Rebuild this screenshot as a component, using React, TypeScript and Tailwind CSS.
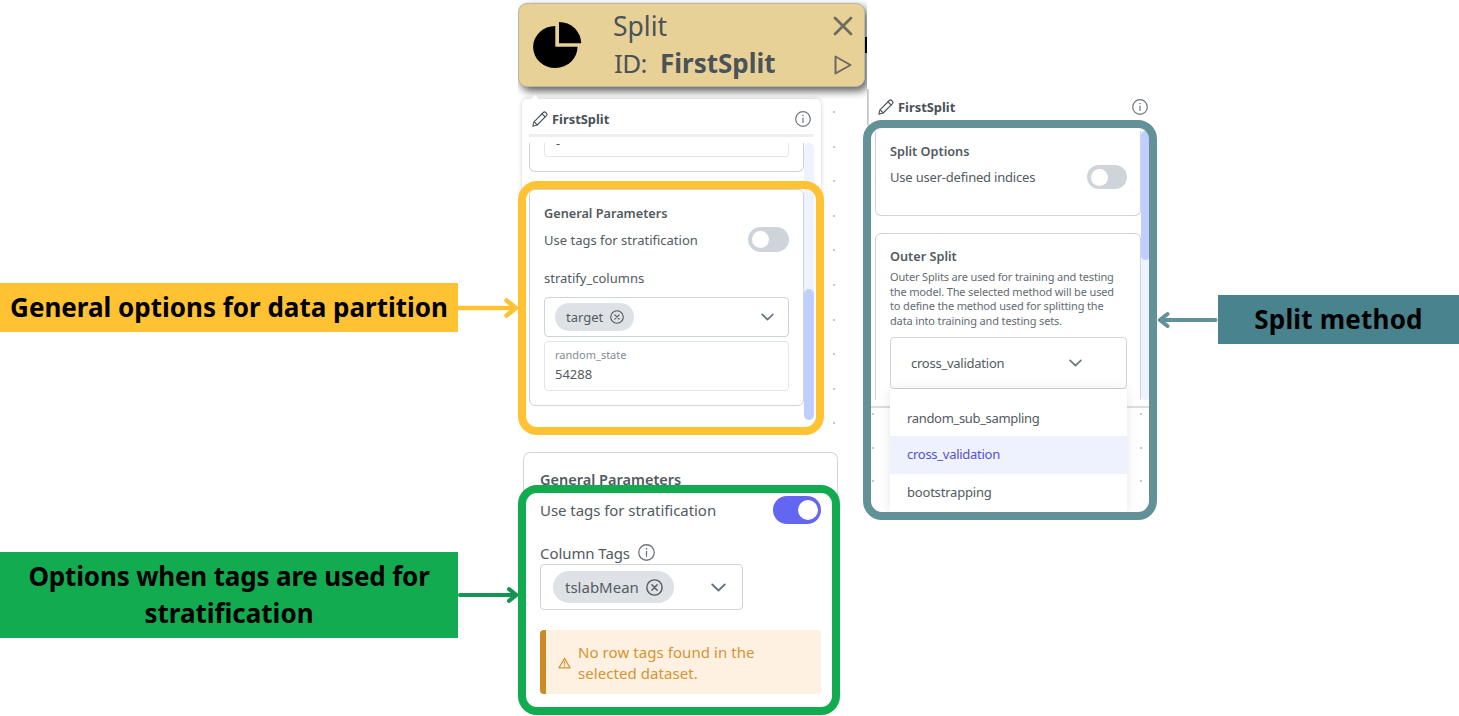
import React from "react";

type IconProps = { className?: string };

function Pencil({ className }: IconProps) {
  return (
    <svg viewBox="0 0 16 16" className={className} fill="none" stroke="currentColor" strokeWidth="1.100" strokeLinejoin="round" strokeLinecap="round">
      <path d="M.8 15.200 2 10.800 11.300 1.500q1.200-1.100 2.400 0l.8.8q1.100 1.200 0 2.400L5.200 14Z" />
      <path d="M10 2.800 13.200 6M2.200 10.800 5.200 13.800" />
    </svg>
  );
}

function Info({ className }: IconProps) {
  return (
    <svg viewBox="0 0 16 16" className={className} fill="none" stroke="currentColor">
      <circle cx="8" cy="8" r="7.300" strokeWidth="1.200" />
      <path d="M8 7v4.500" strokeWidth="1.200" strokeLinecap="round" />
      <circle cx="8" cy="4.600" r=".75" fill="currentColor" stroke="none" />
    </svg>
  );
}

function Remove({ className }: IconProps) {
  return (
    <svg viewBox="0 0 16 16" className={className} fill="none" stroke="currentColor" strokeWidth="1.300" strokeLinecap="round">
      <circle cx="8" cy="8" r="7.200" />
      <path d="m5.500 5.500 5 5m0-5-5 5" />
    </svg>
  );
}

function Chevron({ className }: IconProps) {
  return (
    <svg viewBox="0 0 14 8" className={className} fill="none" stroke="currentColor" strokeWidth="1.800" strokeLinecap="round" strokeLinejoin="round">
      <path d="m1.200 1.200 5.800 5.600 5.800-5.600" />
    </svg>
  );
}

function Warning({ className }: IconProps) {
  return (
    <svg viewBox="0 0 14 12" className={className} fill="none" stroke="currentColor" strokeWidth="1.300" strokeLinejoin="round" strokeLinecap="round">
      <path d="M7 1 13 11.200H1Z" />
      <path d="M7 4.500v2.800M7 9.200v.2" />
    </svg>
  );
}

function Dots({ count, className }: { count: number; className: string }) {
  return (
    <div className={`flex flex-col ${className}`}>
      {Array.from({ length: count }, (_, i) => (
        <span key={i} className="size-[2px] shrink-0 rounded-full bg-[#b4b4b4]" />
      ))}
    </div>
  );
}

function Callouts() {
  return (
    <div className="flex w-[518px] shrink-0 flex-col pt-[283px] font-bold text-black">
      <div className="flex items-center">
        <div className="flex h-[49px] w-[458px] items-center justify-center bg-[#ffc233] pb-[2px]">
          <span className="whitespace-nowrap text-[26px] leading-[36px]">General options for data partition</span>
        </div>
        <svg viewBox="0 0 60 24" className="h-6 w-[60px] text-[#ffc233]" fill="none" stroke="currentColor" strokeWidth="4.500" strokeLinecap="round" strokeLinejoin="round">
          <path d="M0 12H57M48.500 4.500 58 12l-9.500 7.500" />
        </svg>
      </div>
      <div className="mt-[220px] flex items-center">
        <div className="flex h-[86px] w-[458px] items-center justify-center bg-[#12ab50]">
          <span className="text-center text-[26px] leading-[37px]">
            <span className="tracking-[-0.16px]">Options when tags are used for</span>
            <br />
            stratification
          </span>
        </div>
        <svg viewBox="0 0 60 24" className="h-6 w-[60px] text-[#129552]" fill="none" stroke="currentColor" strokeWidth="4" strokeLinecap="round" strokeLinejoin="round">
          <path d="M2 12H57M51 6.200 58.500 12 51 17.800" />
        </svg>
      </div>
    </div>
  );
}

function NodeCard() {
  return (
    <div className="relative h-[99px] w-[349px] overflow-hidden pt-[3px]">
      <div className="relative flex h-[84px] w-[347px] rounded-[9px] border border-[#bdb59d] bg-[#e8d197] text-[#4b5359] shadow-[3px_4px_8px_0px_rgba(0,0,0,0.65)]">
        <svg viewBox="0 0 49 46" className="ml-[14px] mt-[18px] h-[46px] w-[49px] text-black" fill="currentColor">
          <path d="M22.300 4A22.200 21 0 1 0 44.500 24.700H22.300Z" />
          <path d="M26 0A22.200 21.300 0 0 1 48.200 21.300H26Z" />
        </svg>
        <div className="ml-[31px] flex flex-col pt-[4px] text-[27px] leading-[37px]">
          <span className="text-[26.500px] leading-[37px]">Split</span>
          <span className="flex text-[26px] leading-[36px]">
            <span className="pl-px tracking-[-0.6px]">ID:</span>
            <b className="ml-[13px]">FirstSplit</b>
          </span>
        </div>
        <div className="absolute right-[11px] top-[12px] flex flex-col items-center gap-[19px] text-[#6d6a60]">
          <svg viewBox="0 0 20 20" className="size-5" stroke="currentColor" strokeWidth="2.700" strokeLinecap="round">
            <path d="m2 2 16 16M18 2 2 18" />
          </svg>
          <svg viewBox="0 0 18 20" className="h-5 w-[18px]" fill="none" stroke="currentColor" strokeWidth="2" strokeLinejoin="round">
            <path d="M1.500 1.500 16.500 10 1.500 18.500Z" />
          </svg>
        </div>
      </div>
      <span className="absolute right-0 top-[37px] h-[16px] w-[2px] bg-black" />
    </div>
  );
}

function PanelHeader({ className }: { className: string }) {
  return (
    <div className={`flex items-center text-[#495057] ${className}`}>
      <Pencil className="size-4" />
      <b className="ml-[4px] text-[12.900px] leading-5">FirstSplit</b>
      <Info className="ml-auto size-4 text-[#6c757d]" />
    </div>
  );
}

function GeneralPanel() {
  return (
    <div className="relative ml-[4px] h-[336px] w-[299px] text-[13px] text-[#535a61]">
      <span className="absolute left-[8px] -top-[4px] size-0 border-x-[5px] border-b-[5px] border-x-transparent border-b-white" />
      <div className="flex h-[328px] flex-col rounded-[5px] bg-white px-[7px] shadow-[0_0_4px_rgba(0,0,0,0.2)]">
        <PanelHeader className="h-[35px] shrink-0 pl-[3px] pr-[3px] pt-[4px]" />
        <div className="h-[3px] shrink-0 bg-[#eeeeee]" />
        <div className="mt-[6px] flex">
          <div className="flex w-[275px] flex-col">
            <div className="h-[29px] rounded-b-md border border-t-0 border-[#ced4da] px-[14px]">
              <div className="h-[14px] rounded-b border border-t-0 border-[#e2e5e9] pl-[11px] leading-[1px]">-</div>
            </div>
            <div className="mt-[17px] flex h-[217px] flex-col rounded-md border border-[#ced4da] pl-[14px] pr-[14px] pt-[13px]">
              <span className="text-[12.700px] font-semibold leading-5">General Parameters</span>
              <div className="mt-[4px] flex h-[25px] items-center justify-between">
                <span className="leading-5">Use tags for stratification</span>
                <span className="flex h-[25px] w-[41px] items-center rounded-full bg-[#ced4da] pl-1">
                  <span className="size-[17px] rounded-full bg-white" />
                </span>
              </div>
              <span className="mt-[16px] leading-5">stratify_columns</span>
              <div className="mt-[9px] flex h-[40px] shrink-0 items-center rounded border border-[#ced4da] pl-[10px] pr-[14px]">
                <span className="flex h-[28px] items-center rounded-full bg-[#dee2e6] pl-[11px] pr-[10px]">
                  <span className="pt-px">target</span>
                  <Remove className="ml-[7px] size-[14px]" />
                </span>
                <Chevron className="ml-auto h-[8px] w-[13px] text-[#6c757d]" />
              </div>
              <div className="mt-1 flex h-[50px] shrink-0 flex-col rounded border border-[#e2e5e9] pl-[10px] pt-[4px]">
                <span className="text-[11px] leading-[18px] text-[#858b92]">random_state</span>
                <span className="leading-5">54288</span>
              </div>
            </div>
          </div>
          <div className="flex h-[277px] w-[10px] flex-col justify-end rounded-full bg-[#eff3ff]">
            <div className="h-[131px] rounded-full bg-[#bfcefe]" />
          </div>
        </div>
      </div>
      <div className="absolute -left-[4px] top-[82px] h-[254px] w-[306px] rounded-[19px] border-8 border-[#ffc233]" />
    </div>
  );
}

function TagsPanel() {
  return (
    <div className="relative ml-[5px] mt-[17px] h-[260px] w-[315px]">
      <div className="flex h-[252px] flex-col rounded-t-[7px] border border-b-0 border-[#d3d5d8] px-4 pt-[15px] text-[15px] text-[#535a61]">
        <span className="text-[14.500px] font-semibold leading-[22px]">General Parameters</span>
        <div className="mt-[6px] flex h-7 shrink-0 items-center justify-between">
          <span className="tracking-[-0.05px]">Use tags for stratification</span>
          <span className="flex h-7 w-[48px] items-center justify-end rounded-full bg-[#6366f1] pr-[3px]">
            <span className="size-[20px] rounded-full bg-white" />
          </span>
        </div>
        <div className="mt-[18px] flex h-[22px] shrink-0 items-center">
          <span className="tracking-[-0.08px]">Column Tags</span>
          <Info className="mb-[2px] ml-[8px] size-[17px] text-[#6c757d]" />
        </div>
        <div className="flex h-[46px] w-[203px] shrink-0 items-center rounded border border-[#ced4da] pl-3 pr-[16px]">
          <span className="flex h-8 items-center rounded-full bg-[#dee2e6] pl-3 pr-[11px]">
            <span>tslabMean</span>
            <Remove className="ml-[7px] size-[17px]" />
          </span>
          <Chevron className="ml-auto h-[9px] w-[15px] text-[#6c757d]" />
        </div>
        <div className="mt-[20px] flex h-[64px] w-[281px] shrink-0 items-center rounded border-l-[6px] border-[#cc8925] bg-[#fff1e2] pl-[12px] text-[#d69331]">
          <Warning className="mt-[2px] h-[12px] w-[13px]" />
          <span className="ml-[7px] pt-px leading-[21px] tracking-[0.07px]">
            No row tags found in the
            <br />
            selected dataset.
          </span>
        </div>
      </div>
      <div className="absolute -left-[5px] top-[33px] h-[230px] w-[322px] rounded-[19px] border-8 border-[#12ab50]" />
    </div>
  );
}

function SplitPanel() {
  return (
    <div className="relative mt-[89px] h-[431px] w-[294px] shrink-0 text-[13px] text-[#535a61]">
      <span className="absolute left-[4px] top-0 h-[36px] w-[2px] bg-linear-to-r from-[#b5b5b5] to-[#e5e5e5]" />
      <div className="ml-[5px] flex h-[319px] w-[285px] flex-col border-b-2 border-l border-[#dddddd] pl-[6px]">
        <PanelHeader className="h-[34px] shrink-0 pl-[3px] pr-[5px] pt-[2px]" />
        <div className="mt-[8px] flex">
          <div className="flex h-[269px] w-[266px] flex-col overflow-hidden">
            <div className="flex h-[85px] shrink-0 flex-col rounded-b-md border border-t-0 border-[#ced4da] pl-[14px] pr-[13px] pt-[10px]">
              <span className="text-[12.700px] font-semibold leading-5">Split Options</span>
              <div className="mt-[4px] flex h-[24px] items-center justify-between">
                <span className="pt-px tracking-[-0.2px]">Use user-defined indices</span>
                <span className="flex h-[24px] w-[40px] items-center rounded-full bg-[#ced4da] pl-1">
                  <span className="size-[17px] rounded-full bg-white" />
                </span>
              </div>
            </div>
            <div className="mt-[17px] flex h-[190px] shrink-0 flex-col rounded-t-md border border-[#ced4da] px-[14px] pt-[12px]">
              <span className="text-[12.700px] font-semibold leading-5">Outer Split</span>
              <p className="mt-[4px] whitespace-nowrap text-[11px] leading-[14.700px] tracking-[-0.15px] text-[#646b72]">
                Outer Splits are used for training and testing
                <br />
                the model. The selected method will be used
                <br />
                to define the method used for splitting the
                <br />
                data into training and testing sets.
              </p>
              <div className="mt-[8px] flex h-[52px] w-[237px] shrink-0 items-center rounded border border-[#ced4da] pl-[20px] pr-[44px]">
                <span className="pt-px tracking-[-0.25px]">cross_validation</span>
                <Chevron className="ml-auto h-[8px] w-[13px] text-[#6c757d]" />
              </div>
            </div>
          </div>
          <div className="h-[269px] w-[9px] rounded-full bg-[#eff3ff]">
            <div className="h-[129px] rounded-full bg-[#bfcefe]" />
          </div>
        </div>
      </div>
      <Dots count={3} className="absolute left-[9px] top-[324px] gap-[31.500px]" />
      <Dots count={3} className="absolute left-[277px] top-[324px] gap-[31.500px]" />
      <div className="absolute left-[27px] top-[300px] flex h-[123px] w-[237px] flex-col overflow-hidden rounded-t bg-white pt-[10px] tracking-[-0.33px] shadow-[0_0_12px_rgba(0,0,0,0.1)]">
        <span className="flex h-[37px] shrink-0 items-center pl-[17px] pt-[2px]">random_sub_sampling</span>
        <span className="flex h-[38px] shrink-0 items-center bg-[#eef2ff] pl-[17px] tracking-[-0.27px] text-[#5450cf]">cross_validation</span>
        <span className="flex h-[38px] shrink-0 items-center pl-[17px] tracking-[-0.2px]">bootstrapping</span>
      </div>
      <div className="absolute left-0 top-[31px] h-[400px] w-[294px] rounded-[19px] border-8 border-[#629198]" />
    </div>
  );
}

export default function App() {
  return (
    <main className="flex h-[716px] w-[1459px] overflow-hidden bg-white font-['Noto_Sans',sans-serif]">
      <Callouts />
      <div className="flex w-[345px] shrink-0 flex-col">
        <NodeCard />
        <div className="flex">
          <GeneralPanel />
          <Dots count={10} className="ml-[12px] mt-[12px] gap-[32.600px]" />
        </div>
        <TagsPanel />
      </div>
      <SplitPanel />
      <div className="mt-[295px] flex h-[49px] flex-1 items-center self-start">
        <svg viewBox="0 0 61 24" className="h-6 w-[61px] text-[#629198]" fill="none" stroke="currentColor" strokeWidth="4" strokeLinecap="round" strokeLinejoin="round">
          <path d="M58.500 12H3M10.500 6 2.800 12l7.700 6" />
        </svg>
        <div className="flex h-[49px] w-[241px] items-center justify-center bg-[#49838d] pb-[2px]">
          <span className="text-[26px] font-bold leading-[36px] tracking-[0.2px] text-black">Split method</span>
        </div>
      </div>
    </main>
  );
}
